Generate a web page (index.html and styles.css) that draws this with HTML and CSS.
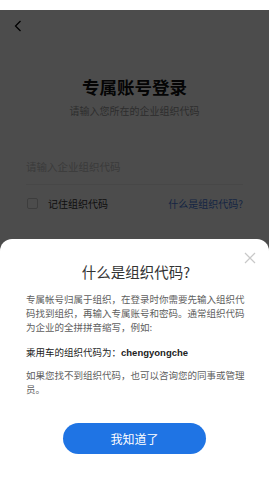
FILE: index.html
```html
<!DOCTYPE html>
<html lang="zh">
<head>
<meta charset="utf-8">
<link rel="stylesheet" href="styles.css">
</head>
<body>
<div class="status"></div>
<div class="page">
  <div class="nav">
    <svg class="back" width="8" height="12" viewBox="0 0 8 12"><path d="M6.5 1 L1.5 6 L6.5 11" fill="none" stroke="#000" stroke-width="1.3"/></svg>
  </div>
  <h1 class="title">专属账号登录</h1>
  <p class="subtitle">请输入您所在的企业组织代码</p>
  <div class="field">请输入企业组织代码</div>
  <div class="options">
    <label class="remember"><span class="box"></span>记住组织代码</label>
    <span class="link">什么是组织代码?</span>
  </div>
  <div class="overlay"></div>
  <div class="sheet">
    <svg class="close" width="12" height="12" viewBox="0 0 12 12"><path d="M1 1 L11 11 M11 1 L1 11" stroke="#c8c8c8" stroke-width="1.2"/></svg>
    <h2 class="sheet-title">什么是组织代码?</h2>
    <p class="para">专属帐号归属于组织，在登录时你需要先输入组织代码找到组织，再输入专属账号和密码。通常组织代码为企业的全拼拼音缩写，例如:</p>
    <p class="example">乘用车的组织代码为：<b>chengyongche</b></p>
    <p class="para">如果您找不到组织代码，也可以咨询您的同事或管理员。</p>
    <div class="btn-row"><button class="btn">我知道了</button></div>
  </div>
</div>
</body>
</html>
```
FILE: styles.css
```css
* { box-sizing: border-box; }
html, body { margin: 0; padding: 0; }
body {
  width: 269px; height: 478px; overflow: hidden;
  font-family: "Noto Sans CJK SC", "Noto Sans", sans-serif;
  background: #fff;
}
.status { height: 10px; background: #fff; }
.page { position: relative; height: 468px; background: #fff; overflow: hidden; }
.nav { height: 40px; padding: 10px 0 0 14px; }
.back { display: block; }
.title {
  margin: 27px 0 0; text-align: center; font-size: 17.5px; font-weight: 700;
  line-height: 20px; color: #111;
}
.subtitle {
  margin: 7px 0 0; text-align: center; font-size: 10px; line-height: 14px; color: #999;
}
.field {
  margin: 42px 26px 0; padding: 0 0 10px; font-size: 10.5px; line-height: 14px;
  color: #c4c4c4; border-bottom: 1px solid #eee;
}
.options {
  margin: 9px 26px 0 27px; display: flex; justify-content: space-between; align-items: center;
  height: 18px;
}
.remember { display: flex; align-items: center; font-size: 10px; color: #333; }
.box { width: 11px; height: 11px; border: 1px solid #ccc; border-radius: 2px; margin-right: 10px; }
.link { font-size: 10px; color: #4a7de0; }
.overlay { position: absolute; inset: 0; background: rgba(0,0,0,0.7); }
.sheet {
  position: absolute; left: 0; right: 0; bottom: 0; height: 239px;
  background: #fff; border-radius: 12px 12px 0 0;
  padding: 24px 23px 0 26px;
}
.close { position: absolute; right: 13px; top: 13px; }
.sheet-title {
  margin: 0; text-align: center; font-size: 14.5px; font-weight: 400; line-height: 18px; color: #333;
}
.para { margin: 11px 0 0; font-size: 9.5px; line-height: 14px; color: #5e5e5e; }
.example { margin: 11px 0 0; font-size: 9.5px; line-height: 14px; color: #222; }
.example + .para { margin-top: 8px; }
.example b { font-family: "Liberation Sans", "Noto Sans", sans-serif; font-weight: 700; }
.btn-row { display: flex; justify-content: center; margin-top: 27px; }
.btn {
  width: 143px; height: 31px; border: none; border-radius: 16px; background: #1f74e4;
  color: #fff; font-family: inherit; font-size: 12px; margin-left: -3px;
}
```
